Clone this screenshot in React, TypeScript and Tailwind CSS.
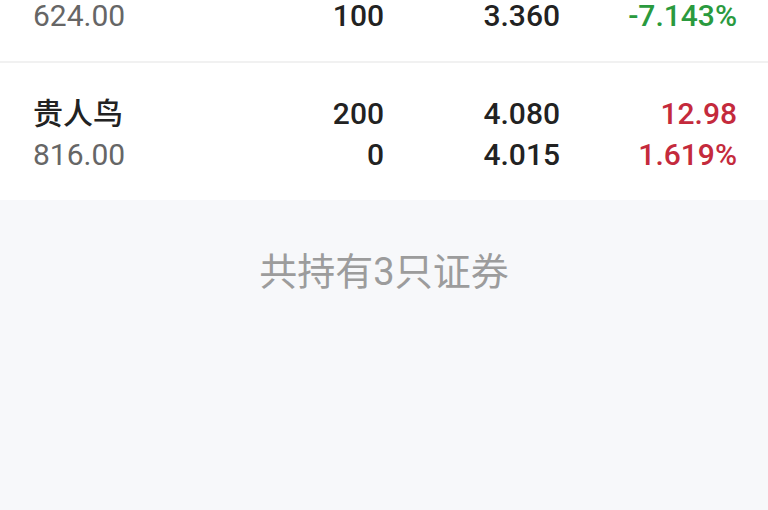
import React from "react";

type Row = {
  name: string;
  value: string;
  qty: string;
  avail: string;
  price: string;
  cost: string;
  profit: string;
  pct: string;
  up: boolean;
};

const rows: Row[] = [
  { name: "中国中冶", value: "624.00", qty: "200", avail: "100", price: "3.120", cost: "3.360", profit: "-48.00", pct: "-7.143%", up: false },
  { name: "贵人鸟", value: "816.00", qty: "200", avail: "0", price: "4.080", cost: "4.015", profit: "12.98", pct: "1.619%", up: true },
];

export default function App() {
  const font = { fontFamily: 'Roboto, "Noto Sans CJK SC", sans-serif' };
  return (
    <div className="w-[768px] h-[510px] overflow-hidden bg-white" style={font}>
      <div className="-mt-[76px]">
        {rows.map((r, i) => (
          <div key={i}>
            {i > 0 && <div className="h-[2px] bg-[#f1f1f1]" />}
            <div className="pl-[33px] pr-[31px] pt-[30px] pb-[25px] text-[30px] leading-[41px] font-medium">
              <div className="flex">
                <div className="w-[200px] text-[#222]">{r.name}</div>
                <div className="w-[151px] text-right text-[#222]">{r.qty}</div>
                <div className="w-[176px] text-right text-[#222]">{r.price}</div>
                <div className={`w-[177px] text-right ${r.up ? "text-[#c42a3c]" : "text-[#2a9a3e]"}`}>{r.profit}</div>
              </div>
              <div className="flex">
                <div className="w-[200px] text-[#666] font-normal">{r.value}</div>
                <div className="w-[151px] text-right text-[#222]">{r.avail}</div>
                <div className="w-[176px] text-right text-[#222]">{r.cost}</div>
                <div className={`w-[177px] text-right ${r.up ? "text-[#c42a3c]" : "text-[#2a9a3e]"}`}>{r.pct}</div>
              </div>
            </div>
          </div>
        ))}
        <div className="h-[420px] bg-[#f7f8fa] pt-[47px] text-center text-[38px] leading-[50px] text-[#9c9c9c]">
          共持有3只证券
        </div>
      </div>
    </div>
  );
}
